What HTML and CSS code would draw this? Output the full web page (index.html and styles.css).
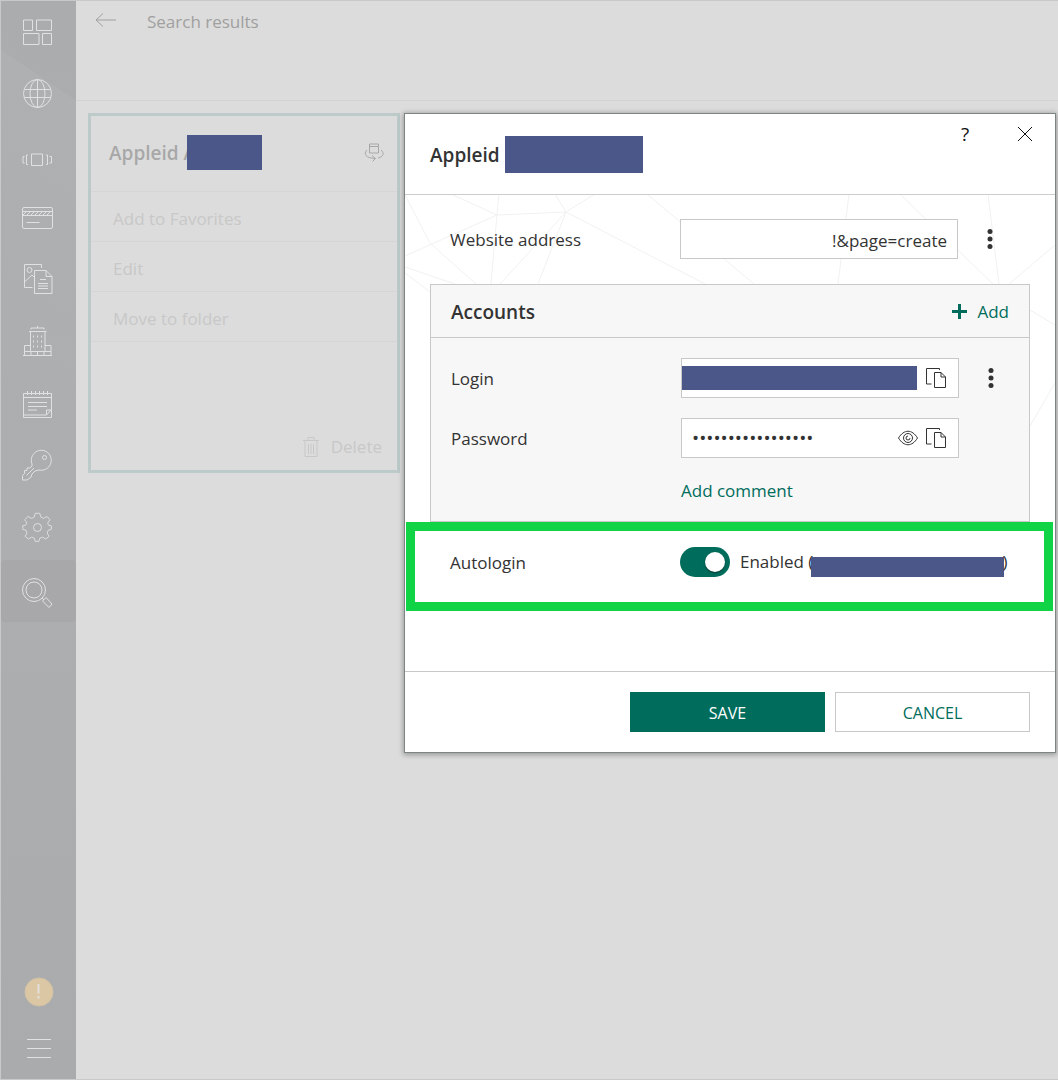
FILE: index.html
```html
<!DOCTYPE html>
<html lang="en">
<head>
<meta charset="utf-8">
<meta name="viewport" content="width=device-width, initial-scale=1">
<title>Search results</title>
<link rel="stylesheet" href="styles.css">
</head>
<body>
<div class="app">
  <nav class="sidebar" aria-label="Main">
    <a class="nav-item" href="#" aria-label="All entries"><svg class="nav-icon" viewBox="0 0 36 36"><path d="M4.500 5h9v10.500h-9zM17.500 5h15v10.500h-15zM4.500 18.500h15.500v11h-15.500zM23.500 18.500h9v11h-9z"/></svg></a>
    <a class="nav-item" href="#" aria-label="Websites"><svg class="nav-icon" viewBox="0 0 36 36"><circle cx="18.500" cy="16.500" r="14"/><ellipse cx="18.500" cy="16.500" rx="7.500" ry="14"/><path d="M18.500 2.500v28M6 12.500h25M5.500 20.500h26"/></svg></a>
    <a class="nav-item" href="#" aria-label="Applications"><svg class="nav-icon" viewBox="0 0 36 36"><path d="M12.500 15h11v11.500h-11zM9 16h-1.500v9.500h1.500M5.500 17.500h-1.500v6.500h1.500M27 16h1.500v9.500h-1.500M30.500 17.500h2v6.500h-2"/></svg></a>
    <a class="nav-item" href="#" aria-label="Bank cards"><svg class="nav-icon" viewBox="0 0 36 36"><rect x="3.500" y="6.500" width="30" height="21" rx="1.500"/><path d="M3.500 10.500h30M3.500 14.500h30M7.500 21.500h13"/><path d="M4 14l3-3M8 14l3-3M12 14l3-3M16 14l3-3M20 14l3-3M24 14l3-3M28 14l3-3"/></svg></a>
    <a class="nav-item" href="#" aria-label="Documents"><svg class="nav-icon" viewBox="0 0 36 36"><path d="M22.500 5V1.500h-17v23h8M5.500 19l7.500-7 2 2M15.500 7.500h11.500l6 6v17h-17.500zM27 7.500v6h6M21 16.500h6M19 20.500h10M19 23h10M19 25.500h10"/><circle cx="10.500" cy="7" r="2.500"/></svg></a>
    <a class="nav-item" href="#" aria-label="Addresses"><svg class="nav-icon" viewBox="0 0 36 36"><path d="M11.500 26V6.500h14.500V26M10 6.500h17.500M12 4.500V3h13v1.500M18.500 1v2M4 30.500h29M5.500 30V20.500h5.500M26 20.500h6V30M5 26.500h27M12 27v3M18.500 27v3M25 27v3"/><path d="M14.500 10.500v2M18.500 10.500v2M22.500 10.500v2M14.500 15.500v2M18.500 15.500v2M22.500 15.500v2M14.500 20.500v2M18.500 20.500v2M22.500 20.500v2"/></svg></a>
    <a class="nav-item" href="#" aria-label="Notes"><svg class="nav-icon" viewBox="0 0 36 36"><path d="M4.500 6.500h28v24h-28zM4.500 10.500h28M8.500 4v4M12.500 4v4M16.500 4v4M20.500 4v4M24.500 4v4M28.500 4v4M9 15.500h19M9 19.500h19M9 23h9M5 28h22.500l4.500-5h-4.500v5"/></svg></a>
    <a class="nav-item" href="#" aria-label="Password generator"><svg class="nav-icon" viewBox="0 0 36 36"><path d="M13 15a10 10 0 1 1 7 6l-4 1-3 3-1 3-4 3H3.500v-4.500l2-2v-3h2.500v-2.500h3l2-2zM7.500 26.500l7.500-7.500"/><circle cx="25.500" cy="8.500" r="2"/></svg></a>
    <a class="nav-item" href="#" aria-label="Settings"><svg class="nav-icon" viewBox="0 0 36 36"><path transform="translate(1.500 0) scale(.92)" d="M16 2.500h5l1 4 3 1.500 4-2 3 3.500-2.500 3.500 1 2.500 3 .5v4l-3.500 1-1 3 2 3.500-3.500 3-3.500-2-3 1-1 3.500h-4l-1-3.500-3-1-3.500 2-3.500-3 2-3.500-1-3-3.500-1v-4l3-.5 1.500-2.500L4.500 9.500l3.500-3.500 4 2 3-1.500z"/><circle cx="18.500" cy="16.500" r="4"/></svg></a>
    <a class="nav-item nav-item-active" href="#" aria-current="page" aria-label="Search"><svg class="nav-icon" viewBox="0 0 36 36"><circle cx="15" cy="17" r="11.500"/><circle cx="15" cy="17" r="8"/><path d="M23 25l2 2M23.500 28l3.500-3.500 6 6.500-3 3.500z"/></svg></a>
    <div class="nav-bottom">
      <a class="nav-item" href="#" aria-label="Notifications"><svg class="nav-icon" viewBox="0 0 36 36"><circle class="alert-dot" cx="20" cy="18" r="14"/><path class="alert-mark" d="M19.500 10v9.500M19.500 22v2.500"/></svg></a>
      <a class="nav-item nav-menu" href="#" aria-label="Menu"><svg class="nav-icon" viewBox="0 0 36 36"><path d="M8 9.500h24M8 18.500h24M8 27.500h24"/></svg></a>
    </div>
  </nav>

  <main class="content">
    <header class="topbar">
      <a class="back" href="#" aria-label="Back"><svg width="24" height="20" viewBox="0 0 24 20"><path d="M22 10H2M9 3.500L2 10l7 6.500"/></svg></a>
      <h1 class="page-title">Search results</h1>
    </header>
    <section class="card">
      <div class="card-head">
        <h2 class="card-title">Appleid A<span class="mask mask-card"></span></h2>
        <button class="icon-button flip" type="button" aria-label="Flip card"><svg width="20" height="20" viewBox="0 0 20 20"><path d="M5.500 1h9v9h-9zM5.500 3.500h9M3 7C-1 11 2 15 11 15.500M8 12.500l3.500 3-3 3M17 7c4 3 2 7-3 8"/></svg></button>
      </div>
      <a class="card-action" href="#">Add to Favorites</a>
      <a class="card-action" href="#">Edit</a>
      <a class="card-action" href="#">Move to folder</a>
      <a class="card-delete" href="#"><svg width="18" height="22" viewBox="0 0 18 22"><path d="M1 4.500h16M6 4V1.500h6V4M3 5v15.500h12V5M6.500 8v10M9 8v10M11.500 8v10"/></svg>Delete</a>
    </section>
  </main>
</div>

<div class="dialog" role="dialog" aria-labelledby="dialog-title">
  <header class="dialog-head">
    <h2 class="dialog-title" id="dialog-title">Appleid<span class="mask mask-title"></span></h2>
    <div class="window-buttons">
      <button class="icon-button help" type="button" aria-label="Help">?</button>
      <button class="icon-button" type="button" aria-label="Close"><svg width="16" height="16" viewBox="0 0 16 16"><path d="M1 1l14 14M15 1L1 15"/></svg></button>
    </div>
  </header>

  <form class="dialog-body">
    <svg class="web" viewBox="405 195 650 476" aria-hidden="true"><path d="M405 195l25 48 46 41M405 256l92-41-46-21M499 194l-2 21-6 69M497 215l69-3-11-18M566 212l29-18M566 212l-66 72M566 212l-28 72M566 212l139 72M647 194l107 90M405 267l50 17M405 273l25 19M849 194l-11 90M900 194l93 90M988 194l11 90M1009 284l46-39M1030 310l25 15M1030 426l25-43"/></svg>
    <div class="row row-site">
      <label class="label" for="site">Website address</label>
      <div class="field"><input class="input input-site" id="site" type="text" value="!&amp;page=create"></div>
      <button class="icon-button more" type="button" aria-label="Address options"><svg width="6" height="20" viewBox="0 0 6 20"><circle cx="3" cy="2.500" r="2.500"/><circle cx="3" cy="10" r="2.500"/><circle cx="3" cy="17.500" r="2.500"/></svg></button>
    </div>

    <section class="accounts">
      <header class="accounts-head">
        <h3 class="accounts-title">Accounts</h3>
        <button class="add" type="button"><svg width="15" height="15" viewBox="0 0 15 15"><path d="M7.500 0v15M0 7.500h15"/></svg>Add</button>
      </header>
      <div class="accounts-body">
        <div class="row">
          <label class="label" for="login">Login</label>
          <div class="field">
            <input class="input input-masked" id="login" type="text">
            <button class="icon-button copy" type="button" aria-label="Copy login"><svg width="20" height="20" viewBox="0 0 20 20"><path d="M13.500 2V.5H.5v15.500h5M8.500 4.500h6.500l4.500 4.500v10.500h-11zM15 4.500V9h4.500"/></svg></button>
          </div>
          <button class="icon-button more" type="button" aria-label="Account options"><svg width="6" height="20" viewBox="0 0 6 20"><circle cx="3" cy="2.500" r="2.500"/><circle cx="3" cy="10" r="2.500"/><circle cx="3" cy="17.500" r="2.500"/></svg></button>
        </div>
        <div class="row">
          <label class="label" for="password">Password</label>
          <div class="field">
            <input class="input input-password" id="password" type="password" value="passwordpassword1">
            <button class="icon-button" type="button" aria-label="Show password"><svg width="20" height="20" viewBox="0 0 20 20"><path d="M.5 10C6 1 14 1 19.500 10 14 19 6 19 .5 10zM10 8a2 2 0 1 0 2 2"/><circle cx="10" cy="10" r="4.500"/></svg></button>
            <button class="icon-button copy" type="button" aria-label="Copy password"><svg width="20" height="20" viewBox="0 0 20 20"><path d="M13.500 2V.5H.5v15.500h5M8.500 4.500h6.500l4.500 4.500v10.500h-11zM15 4.500V9h4.500"/></svg></button>
          </div>
        </div>
        <a class="add-comment" href="#">Add comment</a>
      </div>
    </section>

    <div class="autologin">
      <label class="label" for="autologin">Autologin</label>
      <input class="toggle" id="autologin" type="checkbox" checked>
      <span class="status">Enabled (<span class="mask mask-status"></span>)</span>
    </div>
  </form>

  <footer class="dialog-foot">
    <button class="button button-primary" type="button">SAVE</button>
    <button class="button" type="button">CANCEL</button>
  </footer>
</div>
</body>
</html>
```

FILE: styles.css
```css
* { box-sizing: border-box; }

body {
  margin: 0;
  background: #dcdcdc;
  color: #333;
  font: 17px/24px "Open Sans", "Noto Sans", sans-serif;
}

h1, h2, h3 { margin: 0; }
a { text-decoration: none; }
svg { display: block; fill: none; stroke: currentColor; }

button, input { font: inherit; color: inherit; }

.app {
  display: flex;
  min-height: 100vh;
  border: 1px solid #c8c9ca;
  border-right: 0;
}

/* Sidebar */
.sidebar {
  flex: 0 0 75px;
  display: flex;
  flex-direction: column;
  padding-top: 1px;
  color: #e0e1e2;
  background:
    linear-gradient(214deg, transparent 82px, #afb0b2 83px, transparent 400px) no-repeat,
    linear-gradient(#abacae, #adaeb0 50%, #a9abad);
}

.nav-item {
  display: flex;
  align-items: center;
  height: 62px;
  padding-left: 18px;
  color: inherit;
}

.nav-item-active { background: #a8a8aa; border-radius: 4px; }
.nav-icon { width: 36px; height: 36px; overflow: visible; }
.nav-bottom { margin-top: auto; }
.nav-menu { height: 50px; margin-bottom: 6px; }
.alert-dot { fill: #dcc7a4; stroke: #d2c1a6; }
.alert-mark { stroke: #e2e0dc; stroke-width: 2; }

/* Page behind the dialog */
.content { flex: 1; min-width: 0; }

.topbar {
  display: flex;
  align-items: flex-start;
  gap: 29px;
  height: 100px;
  padding: 9px 18px;
  border-bottom: 1px solid #d2d2d2;
  color: #a0a0a0;
}

.back { color: inherit; }
.page-title { font-size: 17px; font-weight: 400; }

.card {
  display: flex;
  flex-direction: column;
  width: 312px;
  height: 360px;
  margin: 12px;
  border: 3px solid #bccbc9;
  color: #c8c8c8;
}

.card-head {
  display: flex;
  align-items: center;
  justify-content: space-between;
  height: 76px;
  padding: 0 13px 2px 18px;
  border-bottom: 1px solid #d5d5d5;
  color: #a8a8a8;
}

.card-title, .dialog-title {
  display: flex;
  align-items: center;
  font-size: 19px;
  font-weight: 600;
}

.card-action {
  height: 50px;
  padding: 15px 22px 10px;
  border-bottom: 1px solid #d5d5d5;
  color: inherit;
}

.card-delete {
  display: flex;
  gap: 11px;
  align-items: center;
  justify-content: flex-end;
  margin-top: auto;
  padding: 0 15px 11px;
  color: inherit;
}

/* Hidden personal data */
.mask { background: #4b5789; }
.mask-card { width: 75px; height: 35px; margin-left: -9px; }
.mask-title { width: 138px; height: 37px; margin-left: 5px; }
.mask-status { width: 193px; height: 20px; margin: 10px -2px 0; }

/* Dialog */
.dialog {
  position: absolute;
  top: 113px;
  right: 2px;
  width: min(652px, 100%);
  border: 1px solid #7c8584;
  background: #fff;
  box-shadow: 0 1px 5px 1px rgba(0, 0, 0, 0.3);
}

.dialog-head {
  display: flex;
  justify-content: space-between;
  height: 81px;
  padding: 1px 18px 0 25px;
  border-bottom: 1px solid #ccc;
}

.window-buttons { display: flex; gap: 36px; padding-top: 7px; color: #111; }
.window-buttons .icon-button { width: 24px; height: 24px; }
.help { font-size: 19px; }

.icon-button {
  display: flex;
  align-items: center;
  justify-content: center;
  padding: 0;
  border: 0;
  background: none;
}

.dialog-body {
  position: relative;
  display: flex;
  flex-direction: column;
  padding: 24px 25px 60px;
}

.web {
  position: absolute;
  inset: 0;
  width: 100%;
  height: 100%;
  color: #f1f1f1;
}

.dialog-body > :not(.web) { position: relative; }

.row { display: flex; align-items: center; height: 40px; }
.row-site { margin: 0 20px 25px; }
.label { flex: 0 0 230px; padding-top: 2px; }

.field {
  flex: 0 0 278px;
  display: flex;
  align-items: center;
  min-width: 0;
  height: 40px;
  padding-right: 12px;
  border: 1px solid #c8c8c8;
  background: #fff;
}

.input { flex: 1; width: 0; min-width: 0; height: 24px; padding: 0; border: 0; outline: 0; background: none; }
.input-site { height: 26px; padding-top: 2px; text-align: right; }
.row-site .field { padding-right: 10px; }
.input-masked { background: #4b5789; }
.input-password { padding-left: 10px; font-size: 19px; }
.copy { margin-left: 8px; }
.input-masked + .copy { margin-left: 9px; }
.more { width: 24px; height: 24px; margin-left: 20px; }
.more svg { fill: currentColor; stroke: none; }

.accounts { border: 1px solid #c8c8c8; background: #f7f7f7; }

.accounts-head {
  display: flex;
  align-items: center;
  justify-content: space-between;
  height: 53px;
  padding: 1px 20px 0;
  border-bottom: 1px solid #c8c8c8;
}

.accounts-title { font-size: 19px; font-weight: 600; }

.add {
  display: flex;
  align-items: center;
  gap: 10px;
  padding: 0;
  border: 0;
  background: none;
  color: #006d5c;
}

.add svg { stroke-width: 3; }

.accounts-body {
  display: flex;
  flex-direction: column;
  gap: 20px;
  padding: 20px 20px 17px;
}

.add-comment { align-self: flex-start; height: 26px; margin-left: 230px; padding-top: 1px; color: #006d5c; }

.autologin {
  display: flex;
  align-items: center;
  margin: 0 -23px 0 -24px;
  padding: 16px 35px 25px;
  border: 9px solid #10d445;
  background: #fff;
}

.toggle {
  appearance: none;
  flex: 0 0 50px;
  height: 30px;
  margin: 0 10px 0 0;
  border-radius: 15px;
  background: #006d5c;
}

.toggle::before {
  content: "";
  display: block;
  width: 20px;
  height: 20px;
  margin: 5px;
  border-radius: 50%;
  background: #fff;
  box-shadow: 0 1px 2px rgba(0, 0, 0, 0.5);
}

.toggle:checked::before { margin-left: 25px; }
.status { display: flex; align-items: center; white-space: nowrap; }

.dialog-foot {
  display: flex;
  justify-content: flex-end;
  gap: 10px;
  padding: 20px 25px;
  border-top: 1px solid #c8c8c8;
}

.button {
  width: 195px;
  height: 40px;
  padding: 2px 0 0;
  border: 1px solid #c8c8c8;
  background: #fff;
  color: #006d5c;
  font-size: 16px;
}

.button-primary { border-color: #006d5c; background: #006d5c; color: #fff; }
```
